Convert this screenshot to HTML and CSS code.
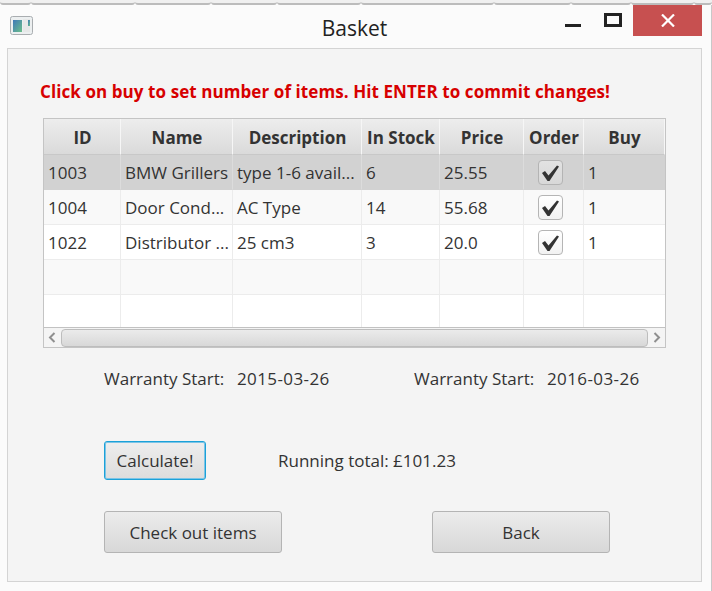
FILE: index.html
```html
<!DOCTYPE html>
<html lang="en">
<head>
    <meta charset="UTF-8">
    <title>Basket</title>
    <link rel="stylesheet" href="styles.css">
</head>
<body>
    <div class="strip">
        <span style="width: 31px"></span>
        <span style="width: 104px"></span>
        <span style="width: 76px"></span>
        <span style="width: 66px"></span>
        <span style="width: 84px"></span>
        <span style="width: 133px"></span>
        <span style="width: 77px"></span>
        <span style="width: 60px"></span>
        <span style="width: 63px"></span>
        <span style="width: 18px"></span>
    </div>
    <div class="window">
        <header class="titlebar">
            <svg class="app-icon" width="23" height="19" viewBox="0 0 23 19">
                <defs>
                    <linearGradient id="appGrad" x1="0" y1="0" x2="1" y2="1">
                        <stop offset="0" stop-color="#3f78b8"/>
                        <stop offset="1" stop-color="#6cc08a"/>
                    </linearGradient>
                </defs>
                <rect x="0.5" y="0.5" width="22" height="18" rx="2" fill="#eceff0" stroke="#a9adb0"/>
                <rect x="3" y="4" width="9" height="12" fill="url(#appGrad)"/>
                <rect x="13" y="3" width="7" height="13" fill="#e6e8e8"/>
                <rect x="18" y="4" width="2" height="6" fill="url(#appGrad)"/>
            </svg>
            <h1 class="title">Basket</h1>
            <div class="controls">
                <span class="ctl-min"></span>
                <span class="ctl-max"></span>
                <span class="ctl-close">
                    <svg width="14" height="13" viewBox="0 0 14 13"><path d="M1 0.5 L13 12.5 M13 0.5 L1 12.5" stroke="#fff" stroke-width="2.2" fill="none"/></svg>
                </span>
            </div>
        </header>

        <main class="panel">
            <p class="notice">Click on buy to set number of items. Hit ENTER to commit changes!</p>

            <div class="table">
                <div class="row head">
                    <div class="cell">ID</div>
                    <div class="cell">Name</div>
                    <div class="cell">Description</div>
                    <div class="cell">In Stock</div>
                    <div class="cell">Price</div>
                    <div class="cell">Order</div>
                    <div class="cell">Buy</div>
                </div>
                <div class="row selected">
                    <div class="cell">1003</div>
                    <div class="cell">BMW Grillers</div>
                    <div class="cell">type 1-6 avail...</div>
                    <div class="cell">6</div>
                    <div class="cell">25.55</div>
                    <div class="cell check"><span class="checkbox"><svg width="21" height="21" viewBox="0 0 21 21"><path d="M2 11 L5 9 L8.5 13.5 L17 3.5 L19 4.5 L9.5 19 L7.5 19 Z" fill="#333"/></svg></span></div>
                    <div class="cell">1</div>
                </div>
                <div class="row odd">
                    <div class="cell">1004</div>
                    <div class="cell">Door Cond...</div>
                    <div class="cell">AC Type</div>
                    <div class="cell">14</div>
                    <div class="cell">55.68</div>
                    <div class="cell check"><span class="checkbox"><svg width="21" height="21" viewBox="0 0 21 21"><path d="M2 11 L5 9 L8.5 13.5 L17 3.5 L19 4.5 L9.5 19 L7.5 19 Z" fill="#333"/></svg></span></div>
                    <div class="cell">1</div>
                </div>
                <div class="row">
                    <div class="cell">1022</div>
                    <div class="cell">Distributor ...</div>
                    <div class="cell">25 cm3</div>
                    <div class="cell">3</div>
                    <div class="cell">20.0</div>
                    <div class="cell check"><span class="checkbox"><svg width="21" height="21" viewBox="0 0 21 21"><path d="M2 11 L5 9 L8.5 13.5 L17 3.5 L19 4.5 L9.5 19 L7.5 19 Z" fill="#333"/></svg></span></div>
                    <div class="cell">1</div>
                </div>
                <div class="row odd">
                    <div class="cell"></div><div class="cell"></div><div class="cell"></div><div class="cell"></div><div class="cell"></div><div class="cell"></div><div class="cell"></div>
                </div>
                <div class="row last">
                    <div class="cell"></div><div class="cell"></div><div class="cell"></div><div class="cell"></div><div class="cell"></div><div class="cell"></div><div class="cell"></div>
                </div>
                <div class="scrollbar">
                    <svg class="arrow" width="17" height="19" viewBox="0 0 17 19"><path d="M10.5 5 L6 9.5 L10.5 14" stroke="#8f8f8f" stroke-width="2" fill="none"/></svg>
                    <div class="thumb"></div>
                    <svg class="arrow" width="17" height="19" viewBox="0 0 17 19"><path d="M6.5 5 L11 9.5 L6.5 14" stroke="#8f8f8f" stroke-width="2" fill="none"/></svg>
                </div>
            </div>

            <div class="warranty">
                <div class="warranty-item"><span class="warranty-label">Warranty Start:</span><span class="warranty-date">2015-03-26</span></div>
                <div class="warranty-item"><span class="warranty-label">Warranty Start:</span><span class="warranty-date">2016-03-26</span></div>
            </div>

            <div class="calc-row">
                <button class="btn btn-calc" type="button">Calculate!</button>
                <span class="total">Running total: £101.23</span>
            </div>

            <div class="action-row">
                <button class="btn btn-wide" type="button">Check out items</button>
                <button class="btn btn-wide" type="button">Back</button>
            </div>
        </main>
    </div>
</body>
</html>
```

FILE: styles.css
```css
* {
    box-sizing: border-box;
}

html, body {
    margin: 0;
    padding: 0;
}

body {
    width: 712px;
    height: 591px;
    overflow: hidden;
    background-color: #fbfbfb;
    font-family: "Open Sans", "Noto Sans", sans-serif;
    color: #333;
}

.strip {
    display: flex;
    height: 5px;
    background-color: #fff;
}

.strip span {
    height: 5px;
    background-color: #f0f0f0;
    border-bottom: 2px solid #bcbcbc;
    border-radius: 0 0 3px 3px;
}

.window {
    height: 586px;
    padding: 0 9px 0 7px;
    border-right: 1px solid #c8c8c8;
    position: relative;
}

.titlebar {
    display: flex;
    align-items: flex-start;
    justify-content: space-between;
    height: 43px;
    position: relative;
}

.app-icon {
    margin: 11px 0 0 3px;
}

.title {
    position: absolute;
    left: 0;
    right: 0;
    top: 9px;
    margin: 0;
    font-size: 21px;
    font-weight: 400;
    line-height: 28px;
    text-align: center;
    color: #222;
}

.controls {
    display: flex;
    align-items: flex-start;
}

.ctl-min {
    width: 16px;
    height: 3px;
    margin-top: 19px;
    background-color: #222;
}

.ctl-max {
    width: 18px;
    height: 14px;
    margin: 8px 0 0 23px;
    border: 3px solid #222;
}

.ctl-close {
    display: flex;
    align-items: center;
    justify-content: center;
    width: 69px;
    height: 31px;
    margin-left: 11px;
    background-color: #c75050;
}

.panel {
    width: 695px;
    height: 534px;
    padding: 0 35px;
    background-color: #f4f4f4;
    border: 1px solid #d4d4d4;
}

.notice {
    margin: 0 0 0 -3px;
    padding-top: 31px;
    height: 69px;
    font-size: 17px;
    font-weight: 700;
    line-height: 24px;
    letter-spacing: 0.08px;
    color: #d70000;
    white-space: nowrap;
}

.table {
    width: 623px;
    height: 230px;
    background-color: #fff;
    border: 1px solid #c4c4c4;
}

.row {
    display: grid;
    grid-template-columns: 77px 112px 129px 78px 84px 60px 81px;
    height: 35px;
    font-size: 17px;
    line-height: 36px;
}

.row .cell {
    padding-left: 4px;
    border-right: 1px solid #ececec;
    border-bottom: 1px solid #ececec;
    white-space: nowrap;
    overflow: hidden;
}

.row .cell:last-child {
    border-right: 0;
}

.row.odd {
    background-color: #f9f9f9;
}

.row.selected {
    background-color: #d2d2d2;
}

.row.selected .cell {
    border-color: #dcdcdc;
    border-bottom-color: #d2d2d2;
}

.row.last {
    height: 32px;
}

.row.last .cell {
    border-bottom: 0;
}

.row.head {
    height: 36px;
    font-weight: 700;
    line-height: 38px;
    color: #333;
}

.row.head .cell {
    padding-left: 1px;
    text-align: center;
    background: linear-gradient(#ededed, #dadada);
    border-right: 1px solid #f6f6f6;
    border-bottom: 1px solid #c8c8c8;
}

.cell.check {
    display: flex;
    align-items: center;
    justify-content: center;
    padding: 0 6px 0 0;
}

.checkbox {
    display: block;
    width: 25px;
    height: 25px;
    padding: 1px;
    background: linear-gradient(#fff, #f2f2f2);
    border: 1px solid #b5b5b5;
    border-radius: 4px;
}

.selected .checkbox {
    background: linear-gradient(#e2e2e2, #d8d8d8);
    border-color: #b4b4b4;
}

.checkbox svg {
    display: block;
}

.scrollbar {
    display: flex;
    align-items: center;
    height: 20px;
    background-color: #f4f4f4;
    border-top: 1px solid #c2c2c2;
}

.arrow {
    flex: none;
}

.thumb {
    flex: 1;
    height: 18px;
    background: linear-gradient(#ebebeb, #d8d8d8);
    border: 1px solid #bdbdbd;
    border-radius: 4px;
}

.warranty {
    display: flex;
    padding: 20px 0 0 61px;
    height: 62px;
    font-size: 17px;
    line-height: 22px;
}

.warranty-item {
    display: flex;
    flex: none;
    width: 310px;
}

.warranty-label {
    width: 133px;
}

.warranty-date {
    letter-spacing: 0.4px;
}

.calc-row {
    display: flex;
    align-items: center;
    gap: 72px;
    margin-top: 31px;
    padding-left: 61px;
    font-size: 17px;
}

.btn {
    font-family: inherit;
    font-size: 17px;
    color: #333;
    background: linear-gradient(#ececec, #d8d8d8);
    border: 1px solid #b4b4b4;
    border-radius: 3px;
    padding: 0;
}

.btn-calc {
    width: 102px;
    height: 39px;
    background: linear-gradient(#eeeeee, #dcdcdc);
    border: 1px solid #1ba1d8;
    box-shadow: inset 0 0 0 1px #7cc4e6;
}

.action-row {
    display: flex;
    gap: 150px;
    margin-top: 31px;
    padding-left: 61px;
}

.btn-wide {
    width: 178px;
    height: 42px;
}
```
